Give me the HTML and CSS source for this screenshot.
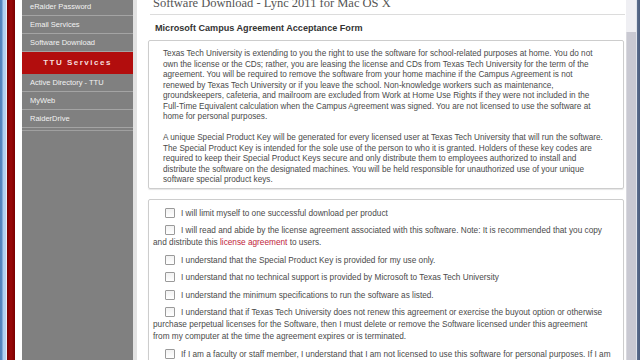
FILE: index.html
```html
<!DOCTYPE html>
<html>
<head>
<meta charset="utf-8">
<link rel="stylesheet" href="styles.css">
</head>
<body>
<div class="page">
  <div class="frame-left"></div>
  <div class="redstrip"></div>
  <nav class="sidebar">
    <ul class="menu">
      <li class="item">eRaider Password</li>
      <li class="item">Email Services</li>
      <li class="item">Software Download</li>
      <li class="header">TTU Services</li>
      <li class="item">Active Directory - TTU</li>
      <li class="item">MyWeb</li>
      <li class="item">RaiderDrive</li>
    </ul>
    <div class="menu-end"></div>
  </nav>
  <main class="content">
    <h1 class="title">Software Download - Lync 2011 for Mac OS X</h1>
    <h2 class="form-title">Microsoft Campus Agreement Acceptance Form</h2>
    <div class="box terms">
      <p>Texas Tech University is extending to you the right to use the software for school-related purposes at home. You do not<br>own the license or the CDs; rather, you are leasing the license and CDs from Texas Tech University for the term of the<br>agreement. You will be required to remove the software from your home machine if the Campus Agreement is not<br>renewed by Texas Tech University or if you leave the school. Non-knowledge workers such as maintenance,<br>groundskeepers, cafeteria, and mailroom are excluded from Work at Home Use Rights if they were not included in the<br>Full-Time Equivalent calculation when the Campus Agreement was signed. You are not licensed to use the software at<br>home for personal purposes.</p>
      <p>A unique Special Product Key will be generated for every licensed user at Texas Tech University that will run the software.<br>The Special Product Key is intended for the sole use of the person to who it is granted. Holders of these key codes are<br>required to keep their Special Product Keys secure and only distribute them to employees authorized to install and<br>distribute the software on the designated machines. You will be held responsible for unauthorized use of your unique<br>software special product keys.</p>
    </div>
    <div class="box checks">
      <p><span class="cb"></span>I will limit myself to one successful download per product</p>
      <p><span class="cb"></span>I will read and abide by the license agreement associated with this software. Note: It is recommended that you copy<br>and distribute this <span class="link">license agreement</span> to users.</p>
      <p><span class="cb"></span>I understand that the Special Product Key is provided for my use only.</p>
      <p><span class="cb"></span>I understand that no technical support is provided by Microsoft to Texas Tech University</p>
      <p><span class="cb"></span>I understand the minimum specifications to run the software as listed.</p>
      <p><span class="cb"></span>I understand that if Texas Tech University does not renew this agreement or exercise the buyout option or otherwise<br>purchase perpetual licenses for the Software, then I must delete or remove the Software licensed under this agreement<br>from my computer at the time the agreement expires or is terminated.</p>
      <p><span class="cb"></span>If I am a faculty or staff member, I understand that I am not licensed to use this software for personal purposes. If I am<br>a student, I understand that I am licensed to use this software for personal purposes.</p>
    </div>
  </main>
  <div class="scrollbar"><div class="thumb"></div></div>
  <div class="frame-right"></div>
</div>
</body>
</html>
```

FILE: styles.css
```css
html, body {
  margin: 0;
  padding: 0;
  background: #ffffff;
}
.page {
  display: flex;
  width: 640px;
  height: 360px;
  overflow: hidden;
  font-family: "Liberation Sans", Arial, sans-serif;
}
.frame-left {
  width: 6px;
  flex: none;
  background: linear-gradient(to right, #4f7fb8 0, #5a8ac2 2px, #aecdee 3px, #b8d4f0 6px);
  border-right: 1px solid #e8eef6;
}
.redstrip {
  width: 8px;
  flex: none;
  background: linear-gradient(to right, #7a0000, #9a0808 50%, #7a0000);
}
.sidebar {
  width: 111px;
  flex: none;
  margin-left: 7px;
  background: #808080;
  border-right: 4px solid #e2e2e2;
}
.menu {
  list-style: none;
  margin: -2px 0 0 0;
  padding: 0;
}
.item {
  height: 17px;
  line-height: 17px;
  padding-left: 8px;
  font-size: 7.5px;
  color: #f2f2f2;
  border-bottom: 1px solid #a4a4a4;
  white-space: nowrap;
}
.header {
  height: 22px;
  line-height: 22px;
  text-align: center;
  background: #b20d0d;
  color: #f6dede;
  font-size: 8px;
  font-weight: bold;
  letter-spacing: 1.5px;
}
.menu-end {
  margin-top: 2px;
  border-top: 1px solid #a0a0a0;
}
.content {
  flex: 1;
  padding-left: 11px;
  min-width: 0;
}
.title {
  margin: -5px 1px 0 2px;
  padding: 0 0 3px 3px;
  font-family: "Liberation Serif", "Times New Roman", serif;
  font-weight: normal;
  font-size: 12.5px;
  line-height: 16px;
  letter-spacing: 0;
  color: #555555;
  border-bottom: 1px solid #dcdcdc;
  white-space: nowrap;
}
.form-title {
  margin: 7px 0 0 0;
  padding-left: 7px;
  font-size: 9.1px;
  line-height: 12px;
  font-weight: bold;
  color: #333333;
  white-space: nowrap;
}
.box {
  margin-right: 2px;
  border: 1px solid #cdcdcd;
  border-radius: 2px;
  box-shadow: 0 1px 1px #e6e6e6;
  color: #4a4a4a;
  white-space: nowrap;
}
.terms {
  margin-top: 6px;
  padding: 8px 0 2px 14px;
  font-size: 8.2px;
  line-height: 10.5px;
}
.terms p {
  margin: 0 0 10.5px 0;
}
.terms p:last-child {
  margin-bottom: 0;
}
.checks {
  margin-top: 10px;
  padding: 8px 0 0 4px;
  font-size: 8.25px;
  line-height: 12px;
}
.checks p {
  margin: 0 0 5.5px 0;
}
.cb {
  display: inline-block;
  width: 8px;
  height: 8px;
  margin: 0 6px 0 12px;
  border: 1px solid #9a9a9a;
  border-radius: 1px;
  background: linear-gradient(#f2f2f2, #ffffff);
  vertical-align: -2px;
}
.link {
  color: #c0243a;
}
.scrollbar {
  width: 10px;
  flex: none;
  background: #efeff3;
  display: flex;
  flex-direction: column;
  padding-top: 32px;
  box-sizing: border-box;
}
.thumb {
  flex: 1;
  background: #c9c9d2;
  border-left: 1px solid #d8d8de;
}
.frame-right {
  width: 4px;
  flex: none;
  background: linear-gradient(to right, #dfe3ea 0, #dfe3ea 1px, #5d6f8e 1px, #4a5c7c 4px);
}
```
